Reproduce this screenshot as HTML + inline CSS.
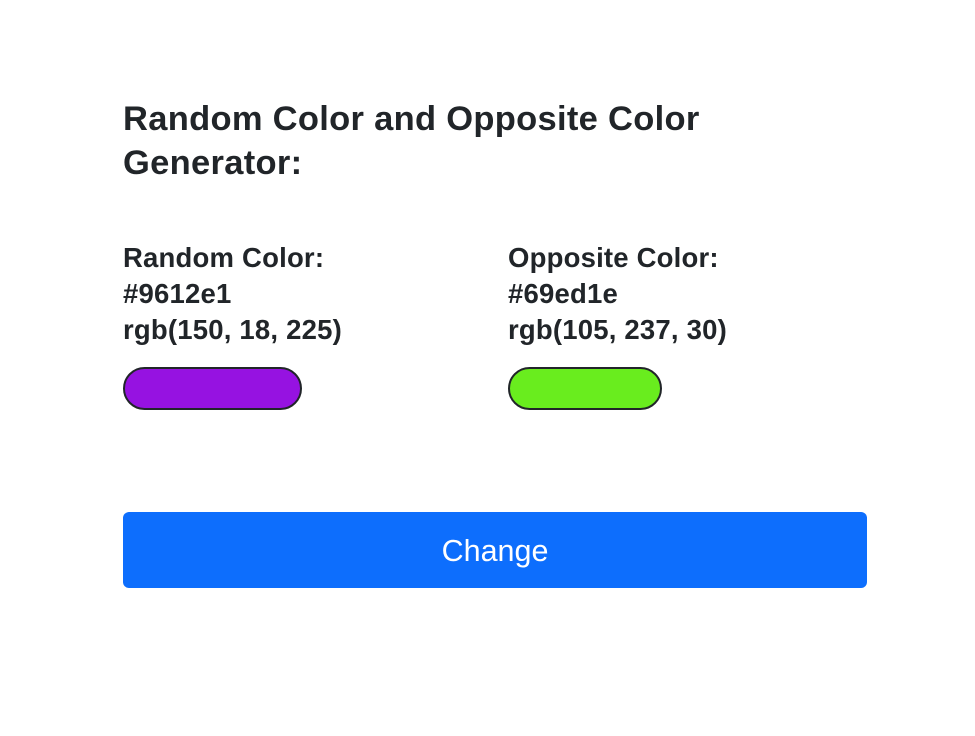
<!DOCTYPE html>
<html><head><meta charset="utf-8"><style>
html,body{margin:0;padding:0;background:#fff;width:975px;height:736px;overflow:hidden;font-family:"Liberation Sans",sans-serif;color:#212529}
h2{position:absolute;left:123px;top:97px;margin:0;font-size:34.5px;line-height:44px;font-weight:bold;width:720px;letter-spacing:0.3px}
.col{position:absolute;top:240px;font-size:27.5px;line-height:36px;font-weight:bold;letter-spacing:0.2px}
.sw{position:absolute;top:367px;height:39px;border:2.5px solid #212529;border-radius:22px}
.btn{position:absolute;left:123px;top:512px;width:744px;height:76px;background:#0d6efd;border-radius:6px;color:#fff;font-size:30.5px;line-height:78px;text-align:center}
</style></head><body>
<h2>Random Color and Opposite Color<br>Generator:</h2>
<div class="col" style="left:123px">Random Color:<br>#9612e1<br>rgb(150, 18, 225)</div>
<div class="col" style="left:508px">Opposite Color:<br>#69ed1e<br>rgb(105, 237, 30)</div>
<div class="sw" style="left:123px;width:175px;background:#9612e1"></div>
<div class="sw" style="left:508px;width:150px;background:#69ed1e"></div>
<div class="btn">Change</div>
</body></html>
